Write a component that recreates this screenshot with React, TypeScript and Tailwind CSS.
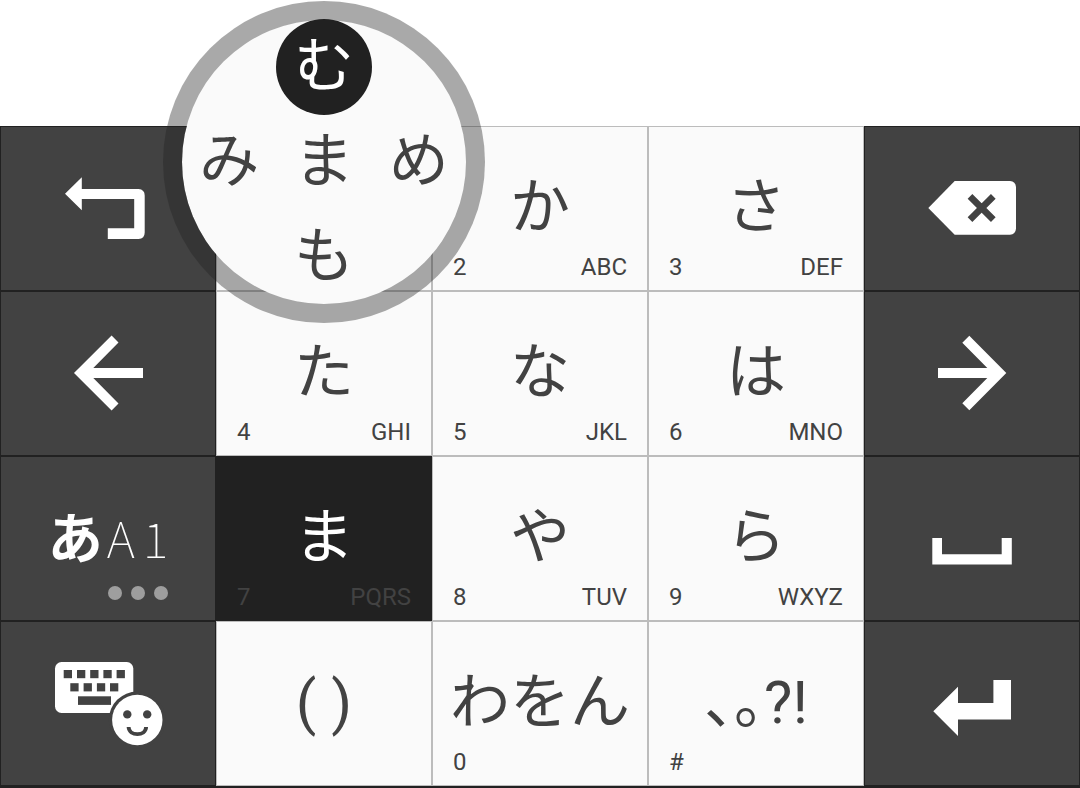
import type { ReactNode } from "react";

const KANA_FONT = "font-[Roboto,'Noto_Sans_CJK_JP',sans-serif]";

type KanaKeyProps = {
  label: string;
  digit?: string;
  letters?: string;
  active?: boolean;
};

function KanaKey({ label, digit, letters, active }: KanaKeyProps) {
  const tone = active
    ? "border-[#212121] bg-[#212121] text-white"
    : "border-[#bcbcbc] bg-[#fafafa] text-[#424242]";
  return (
    <button
      type="button"
      aria-pressed={active}
      className={`flex min-h-[165px] w-full flex-col border px-5 pt-[34px] pb-[11px] ${tone}`}
    >
      <span className="flex w-full flex-1 items-center justify-center text-[60px] leading-[60px] whitespace-nowrap [font-feature-settings:'halt']">
        {label}
      </span>
      <span
        className={`flex h-6 w-full justify-between text-2xl leading-6 ${active ? "text-[#424242]" : ""}`}
      >
        <span>{digit}</span>
        <span>{letters}</span>
      </span>
    </button>
  );
}

function ActionKey({ label, children }: { label: string; children: ReactNode }) {
  return (
    <button
      type="button"
      aria-label={label}
      className="flex min-h-[165px] w-full items-center justify-center border border-[#212121] bg-[#424242] text-white"
    >
      {children}
    </button>
  );
}

function Icon({ children }: { children: ReactNode }) {
  return (
    <svg viewBox="0 0 120 99" className="h-[99px] w-[120px]" fill="currentColor" aria-hidden="true">
      {children}
    </svg>
  );
}

function FlickPopup() {
  return (
    <div className="pointer-events-none absolute -top-[125px] left-1/2 z-10 grid size-[322px] -translate-x-1/2 grid-cols-3 grid-rows-3 place-items-center rounded-full border-[19px] border-[#212121]/39 bg-[#fafafa] bg-clip-padding text-[60px] leading-[60px] text-[#424242]">
      <span className="col-start-2 flex size-24 items-center justify-center rounded-full bg-[#212121] text-white">
        む
      </span>
      <span className="col-start-1 row-start-2">み</span>
      <span className="col-start-2 row-start-2">ま</span>
      <span className="col-start-3 row-start-2">め</span>
      <span className="col-start-2 row-start-3">も</span>
    </div>
  );
}

const KEYBOARD_KEYS = [
  [15.7, 16], [29, 16], [42.2, 16], [55.4, 16], [68.6, 16],
  [22.3, 29.2], [35.6, 29.2], [48.9, 29.2], [62, 29.2],
];

export default function App() {
  return (
    <main className={`bg-white pt-[126px] ${KANA_FONT}`}>
      <div className="grid grid-cols-5 border-b-2 border-[#212121]">
        <ActionKey label="Undo">
          <Icon>
            <path d="M17 34.8 33.8 18.3V30H90.5Q96.7 30.5 96.7 36.5V73.5Q96.7 79.5 90.5 80H59.8V69.2H86.2V40H33.8V51.3Z" />
          </Icon>
        </ActionKey>
        <div className="relative flex">
          <button
            type="button"
            aria-label="あ"
            className="min-h-[165px] w-full border border-[#bcbcbc] bg-[#fafafa]"
          />
          <FlickPopup />
        </div>
        <KanaKey label="か" digit="2" letters="ABC" />
        <KanaKey label="さ" digit="3" letters="DEF" />
        <ActionKey label="Delete">
          <Icon>
            <path d="M16.3 49 42.7 22H98Q103.5 22.5 104 28V69.7Q103.5 75.2 98 75.7H42.7Z" />
            <path d="M58 37.3 81.3 60.7M81.3 37.3 58 60.7" fill="none" stroke="#424242" strokeWidth="6.6" />
          </Icon>
        </ActionKey>

        <ActionKey label="Move left">
          <Icon>
            <path d="M26 49 63.6 11.5 70.5 18.5 45.3 44H95V54H45.3L70.5 79.5 63.6 86.5Z" />
          </Icon>
        </ActionKey>
        <KanaKey label="た" digit="4" letters="GHI" />
        <KanaKey label="な" digit="5" letters="JKL" />
        <KanaKey label="は" digit="6" letters="MNO" />
        <ActionKey label="Move right">
          <Icon>
            <path d="M94.3 49 57.3 11.7 50.3 18.7 75.3 44H26V54H75.3L50.3 79.3 57.3 86.3Z" />
          </Icon>
        </ActionKey>

        <ActionKey label="Switch input mode">
          <span className="flex flex-col items-end gap-[22px] pt-[30px] font-['Noto_Sans_CJK_JP',sans-serif]">
            <span className="flex items-baseline gap-1 leading-[54px]">
              <span className="text-[55px] font-bold">あ</span>
              <span className="text-[49px] font-thin">A</span>
              <span className="pl-1 text-[49px] font-thin">1</span>
            </span>
            <span className="flex gap-[9px]">
              <span className="size-3.5 rounded-full bg-[#9e9e9e]" />
              <span className="size-3.5 rounded-full bg-[#9e9e9e]" />
              <span className="size-3.5 rounded-full bg-[#9e9e9e]" />
            </span>
          </span>
        </ActionKey>
        <KanaKey label="ま" digit="7" letters="PQRS" active />
        <KanaKey label="や" digit="8" letters="TUV" />
        <KanaKey label="ら" digit="9" letters="WXYZ" />
        <ActionKey label="Space">
          <Icon>
            <path d="M20.3 49H30V65.3H89.7V49H99.8V75.5H20.3Z" />
          </Icon>
        </ActionKey>

        <ActionKey label="Keyboard and emoji">
          <Icon>
            <rect x="7" y="8" width="78.3" height="51" rx="6.5" />
            <g fill="#424242">
              {KEYBOARD_KEYS.map(([x, y]) => (
                <rect key={`${x}-${y}`} x={x} y={y} width="8.3" height="8.2" />
              ))}
              <rect x="30" y="42.3" width="33" height="8.6" />
              <circle cx="89.3" cy="66" r="28.5" />
            </g>
            <circle cx="89.3" cy="66" r="25.2" />
            <g fill="#424242">
              <circle cx="79.3" cy="60.4" r="4.2" />
              <circle cx="99.2" cy="60.4" r="4.2" />
            </g>
            <path d="M80.6 73C81 82.5 97.8 82.5 98.1 73" fill="none" stroke="#424242" strokeWidth="3.9" />
          </Icon>
        </ActionKey>
        <KanaKey label="( )" />
        <KanaKey label="わをん" digit="0" />
        <KanaKey label="、。?!" digit="#" />
        <ActionKey label="Enter">
          <Icon>
            <path d="M21.3 57.3 46 32.7V49H81.4V26H99V65.4H46V81.9Z" />
          </Icon>
        </ActionKey>
      </div>
    </main>
  );
}
